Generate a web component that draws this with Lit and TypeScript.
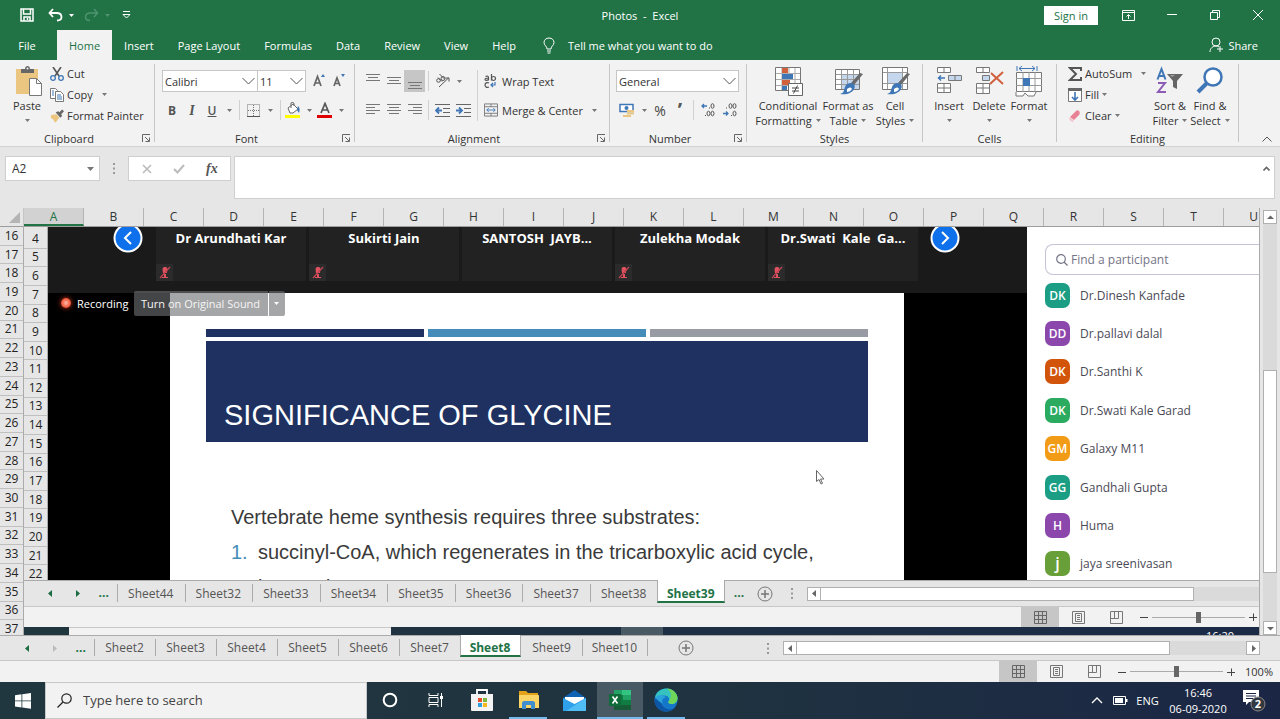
import { LitElement, html, svg, css } from "lit";
import { customElement, state } from "lit/decorators.js";
import { classMap } from "lit/directives/class-map.js";

const range = (from: number, to: number) =>
  Array.from({ length: to - from + 1 }, (_, i) => from + i);

const caret = html`<svg class="caret" width="5" height="3" viewBox="0 0 5 3"><path d="M0 0h5L2.500 3z" fill="#777" /></svg>`;
const launcher = html`<svg width="9" height="9" viewBox="0 0 9 9" fill="none" stroke="#666"><path d="M.5 8V.5H8M3 3l4 4M7.500 3.500v4h-4" /></svg>`;
const chevron = html`<svg class="chev" width="13" height="8" viewBox="0 0 13 8" fill="none" stroke="#555"><path d="M.5 1l6 6 6-6" /></svg>`;

const lines = (rows: [number, number][], y: number) => html`
  <svg width="14" height="16" viewBox="0 0 14 16" stroke="#777">
    ${rows.map(([a, b], i) => svg`<path d="M${a} ${y + i * 3 + 0.5}H${b}" />`)}
  </svg>`;

const brush = svg`
  <path d="M31 8l-9 11-3-2 9-10z" fill="#6a6a6a" />
  <path d="M19 17c3 0 5 3 3 6-2 4-7 6-14 5 4-1 4-4 5-7 1-3 3-4 6-4z" fill="#3f76b5" />
  <path d="M15 23c2-2 4-2 5 0-1 2-3 3-5 3z" fill="#fff" />`;

const icons = {
  save: html`<svg width="14" height="14" viewBox="0 0 14 14" fill="none" stroke="#fff" stroke-width="1.500"><path d="M1 1h12v12H1zM3.500 1v5h7V1M4 13V9h6v4M7.500 10v2" /></svg>`,
  undo: html`<svg width="15" height="14" viewBox="0 0 15 14" fill="none" stroke="#fff" stroke-width="1.800"><path d="M5 1L1.500 5 5 9M2 5h6.500c3 0 5 1.500 5 4s-2 3.500-4.500 3.500" /></svg>`,
  redo: html`<svg width="15" height="14" viewBox="0 0 15 14" fill="none" stroke="#4f9470" stroke-width="1.500"><path d="M10 1l3.500 4L10 9M13 5H6.500c-3 0-5 1.500-5 4s2 3.500 4.500 3.500" /></svg>`,
  customize: html`<svg width="9" height="8" viewBox="0 0 9 8" fill="none" stroke="#fff"><path d="M1 .5h7M1 3.500L4.500 7 8 3.500z" /></svg>`,
  display: html`<svg width="13" height="11" viewBox="0 0 13 11" fill="none" stroke="#fff"><path d="M.5.5h12v10H.5zM.5 2.500h12M6.500 9V5M4.500 6.500l2-2 2 2" /></svg>`,
  min: html`<svg width="10" height="10" viewBox="0 0 10 10" stroke="#fff"><path d="M0 4.500h10" /></svg>`,
  restore: html`<svg width="10" height="10" viewBox="0 0 10 10" fill="none" stroke="#fff"><path d="M.5 2.500h7v7h-7zM2.500 2.500v-2h7v7h-2" /></svg>`,
  close: html`<svg width="10" height="10" viewBox="0 0 10 10" stroke="#fff"><path d="M0 0l10 10M10 0L0 10" /></svg>`,
  bulb: html`<svg width="12" height="17" viewBox="0 0 12 17" fill="none" stroke="#fff"><path d="M4 12c0-3-3-3.500-3-6.500C1 3 3 1 6 1s5 2 5 4.500C11 8.500 8 9 8 12zM4 14h4M4.500 16h3" /></svg>`,
  share: html`<svg width="15" height="16" viewBox="0 0 15 16" fill="none" stroke="#fff"><circle cx="7" cy="5" r="4" /><path d="M1 15c0-4 3-6 6-6 1.500 0 2.500.5 3 1M11 9v6M8 12h6" /></svg>`,
  paste: html`<svg width="32" height="32" viewBox="0 0 32 32"><path d="M5 3h22v25H5z" fill="#ebc680" /><path d="M10 7V3h4c0-4 5-4 5 0h4v4z" fill="#666" /><circle cx="16.500" cy="2.500" r="1" fill="#f2f2f2" /><path d="M18.500 12.500h7l5 5v12h-12z" fill="#fff" stroke="#777" /><path d="M25.500 12.500v5h5" fill="none" stroke="#777" /></svg>`,
  cut: html`<svg width="14" height="14" viewBox="0 0 14 14" fill="none"><path d="M3 0l6 9M11 0L5 9" stroke="#555" stroke-width="1.600" /><circle cx="3" cy="11" r="2.300" stroke="#3f76b5" stroke-width="1.300" /><circle cx="11" cy="11" r="2.300" stroke="#3f76b5" stroke-width="1.300" /></svg>`,
  copy: html`<svg width="14" height="14" viewBox="0 0 14 14" fill="#fff" stroke="#777"><path d="M.5.5h5l2 2v8h-7z" /><path d="M5.500 3.500h5l3 3v7h-8z" /><path d="M2 3h2M2 5h2M2 7h2M7 7h4M7 9h5M7 11h5" stroke="#3f76b5" /></svg>`,
  painter: html`<svg width="14" height="14" viewBox="0 0 15 14"><path d="M1 6l6-1 3 4-4 5c-2-1-2-2-2-3-1 0-2-1-3-2z" fill="#ebc680" /><path d="M6 3l3-1 1 1 3-3 2 2-3 3 1 2-2 2z" fill="#666" /></svg>`,
  grow: html`<svg width="13" height="16" viewBox="0 0 13 16" fill="none" stroke="#666" stroke-width="1.700"><path d="M1 13L4.500 3.500 8 13M2.500 10h4" /><path d="M8 4l2-3 2 3z" fill="#3f76b5" stroke="none" /></svg>`,
  shrink: html`<svg width="13" height="16" viewBox="0 0 13 16" fill="none" stroke="#666" stroke-width="1.700"><path d="M1 13l3-8 3 8M2 10.500h4" /><path d="M8 1h4l-2 3z" fill="#3f76b5" stroke="none" /></svg>`,
  border: html`<svg width="13" height="13" viewBox="0 0 13 13" fill="none" stroke="#777"><path d="M.5.5h12v12H.5zM6.500 1v11M1 6.500h11" stroke-dasharray="1 1" /><path d="M0 12.500h13" stroke="#555" /></svg>`,
  fillColor: html`<svg width="16" height="16" viewBox="0 0 16 16"><path d="M3 6l5-4 5 5-5 4-3 0z" fill="#fff" stroke="#666" /><path d="M6 6V1c1-1 3-1 3 1v2" fill="none" stroke="#666" /><path d="M13 4c2 2 2 4 1 7l-2-3z" fill="#3f76b5" /><path d="M0 13h15v3H0z" fill="#ff0" /></svg>`,
  fontColor: html`<svg width="16" height="16" viewBox="0 0 16 16"><path d="M4 11L8 1.500 12 11M5.500 8h5" fill="none" stroke="#555" stroke-width="1.700" /><path d="M0 13h15v3H0z" fill="#e00000" /></svg>`,
  orient: html`<svg width="15" height="14" viewBox="0 0 15 14" fill="none" stroke="#555"><circle cx="3.500" cy="6.500" r="1.800" /><path d="M3 3.500l4 4" /><circle cx="8" cy="4.500" r="2" /><path d="M4.500 0l5 5M4 13L13.500 4M10.500 4h3.500v3.500" /></svg>`,
  outdent: html`<svg width="15" height="13" viewBox="0 0 15 13" fill="none" stroke="#666"><path d="M0 .5h15M8 4.500h7M8 8.500h7M0 12.500h15" /><path d="M7 6.500H1M4 3.500l-3 3 3 3" stroke="#3f76b5" stroke-width="1.800" /></svg>`,
  indent: html`<svg width="15" height="13" viewBox="0 0 15 13" fill="none" stroke="#666"><path d="M0 .5h15M8 4.500h7M8 8.500h7M0 12.500h15" /><path d="M0 6.500h6M3 3.500l3 3-3 3" stroke="#3f76b5" stroke-width="1.800" /></svg>`,
  wrap: html`<svg width="14" height="14" viewBox="0 0 14 14" fill="none" stroke="#555" stroke-width="1.200"><path d="M1.500 2.500c2-1 3 0 3 1v3M4.500 4c-3 0-3.500.5-3.500 1.500s2 1.500 3.500 0M7.500 0v6.500" /><circle cx="9.500" cy="4.500" r="2" /><path d="M5 9c-2-1-4 0-4 2s2 3 4 2" /><path d="M11 8v3H7M9 9l-2 2 2 2" stroke="#3f76b5" /></svg>`,
  merge: html`<svg width="14" height="14" viewBox="0 0 15 14" fill="none" stroke="#777"><path d="M.5.5h14v13H.5zM.5 3.500h14M.5 10.500h14M7.500.5v3M7.500 10.500v3" /><path d="M3 7h9M5 5L3 7l2 2M10 5l2 2-2 2" stroke="#3f76b5" /></svg>`,
  money: html`<svg width="16" height="15" viewBox="0 0 16 15"><path d="M1 1.500h13v7H1z" fill="#fff" stroke="#3f76b5" stroke-width="1.500" /><circle cx="7.500" cy="5" r="2" fill="#3f76b5" /><path d="M8 7h7v2H8zM8 9.500h7v2H8zM4 12h8v2H4z" fill="#ebc680" /></svg>`,
  incDec: html`<svg width="14" height="14" viewBox="0 0 14 14" fill="none" stroke="#555"><ellipse cx="11.500" cy="3" rx="1.500" ry="2.300" /><ellipse cx="7.500" cy="10.500" rx="1.500" ry="2.300" /><ellipse cx="11.500" cy="10.500" rx="1.500" ry="2.300" /><path d="M8 5h1M4 12.500h1" /><path d="M6 3H1M3 1L1 3l2 2" stroke="#3f76b5" stroke-width="1.300" /></svg>`,
  decDec: html`<svg width="14" height="14" viewBox="0 0 14 14" fill="none" stroke="#555"><ellipse cx="7.500" cy="3" rx="1.500" ry="2.300" /><ellipse cx="11.500" cy="3" rx="1.500" ry="2.300" /><ellipse cx="11.500" cy="10.500" rx="1.500" ry="2.300" /><path d="M3 5h1M8 12.500h1" /><path d="M0 10.500h5M3 8.500l2 2-2 2" stroke="#3f76b5" stroke-width="1.300" /></svg>`,
  conditional: html`<svg width="32" height="32" viewBox="0 0 32 32"><path d="M3.500 1.500h25v23h-25z" fill="#fff" stroke="#777" /><path d="M10 2v22M17 2v22M23 2v22M4 7.500h24M4 13.500h24M4 19.500h24" stroke="#aaa" fill="none" /><path d="M10 2h6v5h-6zM10 14h8v5h-8z" fill="#d1603d" /><path d="M10 8h11v5H10zM10 20h5v4h-5z" fill="#3f76b5" /><path d="M16.500 17.500h14v12h-14z" fill="#fff" stroke="#666" /><path d="M20 22h7M20 25h7M25.500 19.500l-4 8" stroke="#444" fill="none" /></svg>`,
  table: html`<svg width="32" height="32" viewBox="0 0 32 32"><path d="M3.500 3.500h24v20h-24z" fill="#fff" stroke="#777" /><path d="M10 9h17v14H10z" fill="#c5d7ec" /><path d="M9.500 4v19M15.500 4v19M21.500 4v19M4 8.500h23M4 13.500h23M4 18.500h23" stroke="#999" fill="none" />${brush}</svg>`,
  cellStyle: html`<svg width="32" height="32" viewBox="0 0 32 32"><path d="M3.500 1.500h25v22h-25z" fill="#fff" stroke="#777" /><path d="M8.500 2v21M23.500 2v21M4 6.500h24M4 17.500h24" stroke="#999" fill="none" /><path d="M9 7h14v10H9z" fill="#c5d7ec" />${brush}</svg>`,
  insert: html`<svg width="32" height="32" viewBox="0 0 32 32" fill="#fff" stroke="#777"><path d="M4.500 1.500h13v5h-13zM11 1.500v5M4.500 17.500h13v9h-13zM11 17.500v9M4.500 22h13" /><path d="M15.500 9.500h13v5h-13zM22 9.500v5" fill="#c5d7ec" /><path d="M12 12H6M8 9.500L5.500 12 8 14.500" fill="none" stroke="#3f76b5" stroke-width="1.500" /></svg>`,
  del: html`<svg width="32" height="32" viewBox="0 0 32 32" fill="#fff" stroke="#777"><path d="M3.500 1.500h13v5h-13zM10 1.500v5M3.500 17.500h13v10h-13zM10 17.500v10M3.500 22h13" /><path d="M9.500 9.500h7v5h-7z" fill="#c5d7ec" /><path d="M18 7l12 11M30 6L17 18" fill="none" stroke="#d1603d" stroke-width="2" /></svg>`,
  format: html`<svg width="32" height="32" viewBox="0 0 32 32" fill="#fff" stroke="#777"><path d="M3.500 6.500h25v19h-25z" /><path d="M10 6v20M16 6v20M22 6v20M3 12.500h26M3 19.500h26" stroke="#999" fill="none" /><path d="M10 12h7v8h-7z" fill="#3f76b5" stroke="none" /><path d="M3 26v4h7l2-3 3 3h6l2-4" /><path d="M4 0v5M24 0v5M6 2.500h16M9 0L6 2.500 9 5M19 0l3 2.500L19 5" fill="none" stroke="#3f76b5" /></svg>`,
  sum: html`<svg width="14" height="14" viewBox="0 0 14 14" fill="none" stroke="#555" stroke-width="2"><path d="M13 4V1H2l6 6-6 6h11v-3" /></svg>`,
  fill: html`<svg width="14" height="14" viewBox="0 0 14 14"><path d="M.5.5h13v13H.5z" fill="#fff" stroke="#777" /><path d="M0 0h14v3H0z" fill="#666" /><path d="M7 4v8M4 9l3 3 3-3" fill="none" stroke="#3f76b5" stroke-width="1.600" /></svg>`,
  clear: html`<svg width="14" height="14" viewBox="0 0 14 14"><path d="M2 8l6-6c1-1 2-1 3 0s1 3 0 4l-5 5z" fill="#e88194" /><path d="M2 8l4 4-1 1c-1 0-3-1-4-3z" fill="#f6c5cc" /></svg>`,
  sort: html`<svg width="32" height="32" viewBox="0 0 32 32" fill="none"><path d="M3.500 13.500L7.500 3l4 10.500M5 10h5" stroke="#3f76b5" stroke-width="2" /><path d="M4 17h7L4 26h8" stroke="#8b5bb5" stroke-width="2" /><path d="M13 8h16l-6 7v8l-4-2v-6z" fill="#666" /><path d="M16 9.500h5l-3 1z" fill="#ddd" /></svg>`,
  find: html`<svg width="32" height="32" viewBox="0 0 32 32"><circle cx="19" cy="11" r="8.500" fill="#fff" stroke="#3f76b5" stroke-width="2.500" /><path d="M13 17L4 26" stroke="#3f76b5" stroke-width="4" /></svg>`,
  mic: html`<svg width="12" height="13" viewBox="0 0 12 13"><path d="M6 1c3 0 2.500 2 2 6H4c-.5-4-1-6 2-6zM5 8h2v3h2v1H3v-1h2z" fill="#e05260" /><path d="M11 1L1 12" stroke="#c04552" stroke-width="1.300" /></svg>`,
  prev: html`<svg width="30" height="30" viewBox="0 0 30 30"><circle cx="15" cy="15" r="13.500" fill="#0e71eb" stroke="#fff" stroke-width="2" /><path d="M18 9l-6 6 6 6" fill="none" stroke="#fff" stroke-width="2" /></svg>`,
  next: html`<svg width="30" height="30" viewBox="0 0 30 30"><circle cx="15" cy="15" r="13.500" fill="#0e71eb" stroke="#fff" stroke-width="2" /><path d="M12 9l6 6-6 6" fill="none" stroke="#fff" stroke-width="2" /></svg>`,
  plus: html`<svg width="16" height="16" viewBox="0 0 16 16" fill="none" stroke="#777"><circle cx="8" cy="8" r="7" /><path d="M8 4v8M4 8h8" stroke-width="1.500" /></svg>`,
  grid: html`<svg width="13" height="13" viewBox="0 0 13 13" fill="none" stroke="#666"><path d="M.5.5h12v12H.5zM4.500.5v12M8.500.5v12M.5 4.500h12M.5 8.500h12" /></svg>`,
  page: html`<svg width="13" height="13" viewBox="0 0 13 13" fill="none" stroke="#777"><path d="M.5.5h12v12H.5zM3.500 2.500h6v8h-6zM5 4.500h3M5 6.500h3M5 8.500h3" /></svg>`,
  breaks: html`<svg width="13" height="13" viewBox="0 0 13 13" fill="none" stroke="#777"><path d="M.5.5h12v12H.5zM.5 7.500h8v-7M4.500.5v7" /></svg>`,
};

const participants = [
  { initials: "DK", name: "Dr.Dinesh Kanfade", tone: "teal" },
  { initials: "DD", name: "Dr.pallavi dalal", tone: "purple" },
  { initials: "DK", name: "Dr.Santhi K", tone: "orange" },
  { initials: "DK", name: "Dr.Swati Kale Garad", tone: "green" },
  { initials: "GM", name: "Galaxy M11", tone: "amber" },
  { initials: "GG", name: "Gandhali Gupta", tone: "teal" },
  { initials: "H", name: "Huma", tone: "purple" },
  { initials: "j", name: "jaya sreenivasan", tone: "olive" },
];

const tiles = [
  { name: "Dr Arundhati Kar", muted: true },
  { name: "Sukirti Jain", muted: true },
  { name: "SANTOSH  JAYB...", muted: false },
  { name: "Zulekha Modak", muted: true },
  { name: "Dr.Swati  Kale  Ga...", muted: true },
];

@customElement("app-root")
export class AppRoot extends LitElement {
  @state() private sheet = "Sheet8";
  @state() private sharedSheet = "Sheet39";

  static styles = css`
    :host {
      display: flex;
      flex-direction: column;
      height: 100vh;
      overflow: hidden;
      background: #e6e6e6;
      color: #333;
      font: 11px/15px "Open Sans", "Noto Sans", sans-serif;
    }
    * { box-sizing: border-box; }
    button, input, select { font: inherit; color: inherit; margin: 0; }
    button { border: 0; padding: 0; background: none; display: flex; align-items: center; justify-content: center; white-space: nowrap; }
    ul, ol, h1, p { margin: 0; padding: 0; list-style: none; }
    svg { display: block; flex: none; }
    .grow { flex: 1; min-width: 0; }

    .title { display: grid; grid-template-columns: 1fr auto 1fr; align-items: center; height: 30px; background: #217346; color: #fff; }
    .title-name { white-space: pre; }
    .quick { display: flex; align-items: center; padding-left: 20px; }
    .quick .save { width: 14px; }
    .quick .undo { width: 20px; margin-left: 11px; }
    .quick .redo { width: 20px; margin-left: 4px; }
    .quick .more { width: 20px; margin-left: 3px; }
    .quick .tiny { width: 12px; height: 20px; }
    .quick .tiny path { fill: #fff; }
    .quick .dim path { fill: #4f9470; }
    .window { display: flex; justify-content: flex-end; align-items: center; padding-right: 1px; }
    .signin { width: 54px; height: 19px; margin-right: 9px; background: #fff; color: #217346; }
    .window .wbtn { width: 43px; height: 30px; }

    .tabs { display: flex; height: 30px; background: #217346; color: #fff; }
    .tabs button { padding: 0 12px; }
    .tabs .file { width: 57px; padding-right: 15px; }
    .tabs .active { background: #f2f2f2; color: #217346; }
    .tabs .tell { gap: 13px; padding: 0 15px; }
    .tabs .share { gap: 4px; padding: 0 22px; }

    .ribbon { display: flex; height: 87px; background: #f2f2f2; border-bottom: 1px solid #d2d2d2; }
    .gsep { width: 1px; margin: 4px 0; background: #c6c6c6; flex: none; }
    .group { display: flex; flex-direction: column; flex: none; }
    .gbody { display: flex; flex: 1; }
    .foot { display: flex; align-items: center; height: 15px; }
    .foot span { flex: 1; text-align: center; }
    .foot button { width: 16px; height: 15px; }
    .clipboard { width: 154px; }
    .font { width: 199px; }
    .alignment { width: 254px; }
    .number { width: 136px; }
    .styles { width: 175px; }
    .cells { width: 133px; }
    .editing { width: 181px; }
    .big { flex-direction: column; justify-content: flex-start; padding-top: 6px; height: 71px; }
    .big .line { display: flex; align-items: center; gap: 4px; height: 15px; }
    .w56 { width: 54px; }
    .w72 { width: 72px; }
    .w48 { width: 48px; }
    .w46 { width: 46px; }
    .w40 { width: 40px; }
    .three { display: flex; flex-direction: column; padding-top: 3px; }
    .three button { height: 21px; justify-content: flex-start; gap: 3px; }
    .clipboard .three { margin-left: -4px; }
    .three .far { margin-left: 6px; }
    .two { display: flex; flex-direction: column; gap: 7px; padding-top: 10px; }
    .bar { display: flex; align-items: center; height: 22px; }
    .bar button { height: 22px; }
    .c { width: 20px; }
    .c18 { width: 18px; }
    .c22 { width: 22px; }
    .k { width: 14px; }
    .k12 { width: 12px; }
    .on { background: #c6c6c6; }
    .vs { width: 1px; height: 20px; margin: 0 3px; background: #d0d0d0; }
    .bold { font-weight: 700; font-size: 12px; color: #555; }
    .italic { font-family: "Liberation Serif", serif; font-style: italic; font-weight: 700; font-size: 14px; color: #555; }
    .under { text-decoration: underline; font-weight: 600; font-size: 12px; color: #555; }
    .sign { font-size: 14px; color: #444; }
    .comma { font-size: 20px; font-weight: 700; line-height: 10px; color: #555; }
    .pick { display: grid; align-items: center; }
    .pick > * { grid-area: 1 / 1; }
    .pick select { appearance: none; width: 100%; height: 22px; padding: 0 2px; border: 1px solid #c6c6c6; border-radius: 0; background: #fff; }
    .pick .chev { justify-self: end; margin-right: 3px; pointer-events: none; }
    .face { width: 96px; }
    .size { width: 49px; margin-left: -1px; margin-right: 3px; }
    .numfmt { width: 123px; }
    .font .two, .alignment .two { padding-left: 7px; }
    .number .two { padding-left: 6px; }
    .alignment .first { width: 122px; }
    .first .c { width: 21px; }
    .alignment .second { padding-left: 6px; border-left: 1px solid #d0d0d0; margin: 10px 0; padding-top: 0; }
    .second button { gap: 4px; justify-content: flex-start; }
    .second .far { margin-left: 5px; }
    .styles .gbody { padding-left: 5px; }
    .cells .gbody { padding-left: 6px; }
    .editing .gbody { padding-left: 11px; }
    .editing .three { width: 82px; }
    .collapse { align-self: flex-end; width: 26px; height: 14px; }

    .formula { display: flex; align-items: flex-start; height: 61px; padding: 9px 5px; }
    .namebox { display: grid; width: 95px; align-items: center; }
    .namebox > * { grid-area: 1 / 1; }
    .namebox input { width: 100%; height: 25px; border: 1px solid #cfcfcf; background: #fff; padding: 0 6px; font-size: 12px; }
    .namebox button { justify-self: end; width: 20px; height: 20px; }
    .grip { width: 28px; height: 25px; display: flex; align-items: center; justify-content: center; }
    .fx { display: flex; width: 103px; height: 25px; background: #fff; border: 1px solid #cfcfcf; justify-content: space-around; padding: 0 2px; }
    .fx button { width: 33px; }
    .fx .fn { font: italic 700 14px "Liberation Serif", serif; color: #555; }
    .entry { display: flex; flex: 1; align-self: stretch; margin-left: 3px; border: 1px solid #cfcfcf; background: #fff; }
    .entry input { flex: 1; border: 0; background: none; }
    .entry button { width: 16px; height: 22px; }

    .book { display: flex; flex: 1; min-height: 0; }
    .sheet { flex: 1; min-width: 0; display: grid; grid-template: 19px 1fr / 24px 1fr; border-right: 1px solid #ababab; }
    .corner { display: flex; align-items: flex-end; justify-content: flex-end; padding: 3px; border-right: 1px solid #c6c6c6; border-bottom: 1px solid #9d9d9d; }
    .cols { display: flex; overflow: hidden; border-bottom: 1px solid #9d9d9d; }
    .cols span { flex: 0 0 60px; text-align: center; font-size: 12px; line-height: 18px; border-right: 1px solid #b5b5b5; }
    .cols .sel { background: #d2d2d2; color: #217346; border-bottom: 2px solid #217346; }
    .rows { overflow: hidden; min-height: 0; border-right: 1px solid #ababab; }
    .nums { display: grid; grid-auto-rows: 1fr; height: calc(100% + 4px); }
    .nums span { display: flex; align-items: center; justify-content: center; min-height: 0; font-size: 12px; line-height: 14px; color: #222; border-bottom: 1px solid #c0c0c0; }
    .inset { padding-top: 3px; }
    .vscroll { width: 20px; display: flex; flex-direction: column; align-items: center; padding-top: 2px; }
    .arrow { width: 14px; height: 14px; flex: none; background: #fff; border: 1px solid #b0b0b0; }
    .vtrack { flex: 1; width: 14px; display: flex; flex-direction: column; background: #dadada; }
    .vtrack i { flex: 147; }
    .vtrack b { flex: 203; background: #fff; border: 1px solid #b0b0b0; }
    .vtrack u { flex: 48; }

    .pic { min-width: 0; min-height: 0; display: flex; flex-direction: column; overflow: hidden; }
    .shared { flex: 1; min-height: 0; display: grid; grid-template-columns: 24px 1fr 232px; }
    .shared > * { min-width: 0; min-height: 0; overflow: hidden; }
    .meeting { display: flex; flex-direction: column; background: #000; position: relative; }
    .strip { display: flex; flex: none; padding-left: 65px; height: 66px; background: #1a1a1a; color: #fff; }
    .strip .nav { width: 30px; height: 30px; margin-top: -4px; }
    .tiles { display: flex; gap: 3px; padding: 0 12px 0 13px; flex: none; }
    .tile { display: flex; flex-direction: column; justify-content: space-between; width: 150px; height: 54px; background: #222; font-size: 13px; font-weight: 700; white-space: pre; text-align: center; line-height: 22px; }
    .mute { display: flex; align-items: center; justify-content: center; width: 17px; height: 17px; background: #2b2b2b; }
    .recording { position: absolute; top: 63px; left: 9px; display: flex; align-items: center; color: #fff; height: 26px; }
    .dot { width: 10px; height: 10px; margin: 0 6px 0 4px; border-radius: 5px; background: radial-gradient(#ffb9a8, #f25a3c 60%, #d8371c); box-shadow: 0 0 5px #d8371c; }
    .sound { width: 134px; height: 25px; margin-left: 5px; background: rgba(110, 112, 114, 0.62); color: #f5f5f5; border-radius: 2px 0 0 2px; }
    .sound-more { width: 16px; height: 25px; margin-left: 1px; background: rgba(110, 112, 114, 0.62); border-radius: 0 2px 2px 0; }
    .sound-more path { fill: #fff; }
    .slide { flex: 1; min-height: 0; margin: 0 123px 0 122px; padding: 36px 36px 0; background: #fff; overflow: hidden; font-family: "Liberation Sans", Arial, sans-serif; color: #3a3a3a; }
    .bands { display: grid; grid-template-columns: repeat(3, 1fr); gap: 4px; height: 8px; }
    .navy { background: #1e3160; }
    .blue { background: #468cb8; }
    .gray { background: #999ba4; }
    .slide h1 { margin-top: 4px; height: 101px; padding: 57px 18px 0; background: #1e3160; color: #fff; font-size: 29px; font-weight: 400; line-height: 34px; white-space: nowrap; }
    .slide-text { padding: 61px 0 0 25px; font-size: 20px; line-height: 28px; white-space: nowrap; }
    .slide-text li { display: flex; margin-top: 7px; }
    .slide-text .n { width: 27px; color: #468cb8; flex: none; }
    .cursor { position: absolute; left: 768px; top: 243px; }

    .people { background: #fff; display: flex; flex-direction: column; padding: 17px 0 0 18px; }
    .search { display: flex; align-items: center; gap: 3px; height: 31px; flex: none; padding-left: 10px; border: 1px solid #c4c4d4; border-right: 0; border-radius: 8px 0 0 8px; color: #747487; font-size: 12px; }
    .search input { flex: 1; min-width: 0; border: 0; padding: 0; background: none; outline: 0; }
    input::placeholder { color: inherit; opacity: 1; }
    .people ul { display: grid; grid-auto-rows: 1fr; flex: 1; margin: 1px 0 -3px; }
    .people li { display: flex; align-items: center; gap: 10px; font-size: 12px; color: #4a4a56; min-height: 0; }
    .avatar { width: 25px; height: 25px; border-radius: 7px; color: #fff; display: flex; align-items: center; justify-content: center; font-weight: 600; }
    .teal { background: #1b9e84; }
    .purple { background: #8c47ad; }
    .orange { background: #d2540a; }
    .green { background: #2bab60; }
    .amber { background: #f29b16; }
    .olive { background: #689f38; font-size: 16px; }

    .sheetbar { display: flex; align-items: center; height: 27px; flex: none; background: #e6e6e6; border-top: 1px solid #ababab; border-bottom: 1px solid #c8c8c8; font-size: 12px; color: #555; }
    .outer-bar { height: 26px; }
    .steps { display: flex; flex: none; height: 100%; align-items: center; color: #217346; font-weight: 700; }
    .steps button { width: 27px; height: 20px; }
    .steps .dots { padding-bottom: 2px; }
    .outer-steps { width: 94px; padding-left: 14px; }
    .inner-steps { width: 93px; padding-left: 13px; }
    .list { display: grid; flex: none; align-self: stretch; }
    .outer-list { grid-template-columns: repeat(8, 61px) 66px; }
    .inner-list { grid-template-columns: repeat(9, 1fr); width: 608px; }
    .list button { border-left: 1px solid #ababab; margin: 3px 0 4px; padding-right: 1px; }
    .list button:last-child { border-right: 1px solid #ababab; }
    .list .current { margin: -1px 0 3px; padding-top: 5px; background: #fff; color: #217346; font-weight: 700; border-bottom: 2px solid #217346; border-right: 1px solid #ababab; }
    .list .current + button { border-left-color: transparent; }
    .after { width: 28px; color: #217346; font-weight: 700; padding-bottom: 2px; }
    .add { width: 24px; height: 22px; }
    .outer-add { margin-left: 26px; }
    .bar-grip { display: flex; justify-content: center; width: 30px; }
    .hscroll { display: flex; height: 14px; background: #dadada; flex: none; }
    .hscroll b { background: #fff; border: 1px solid #b0b0b0; border-left: 0; width: 373px; }
    .outer-scroll { width: 477px; }
    .inner-scroll { width: 452px; }
    .end { width: 20px; flex: none; }

    .status { display: flex; align-items: center; justify-content: flex-end; height: 20px; flex: none; background: #f2f2f2; }
    .outer-status { height: 21px; padding-right: 7px; }
    .status .view { width: 38px; align-self: stretch; }
    .status .zoom { width: 12px; height: 18px; }
    .status .lead { margin-left: 3px; }
    .status input { width: 93px; margin: 0 2px; height: 14px; appearance: none; background: linear-gradient(#aaa, #aaa) center / 100% 1px no-repeat; }
    .status input::-webkit-slider-thumb { appearance: none; width: 5px; height: 11px; background: #666; }
    .pct { margin-left: 8px; }
    .under-strip { display: flex; height: 8px; flex: none; background: linear-gradient(90deg, #21373f, #1b2a47); overflow: hidden; color: #fff; }
    .under-search { width: 322px; margin-left: 45px; background: #f2f2f2; border-top: 1px solid #c8c8c8; }
    .under-app { width: 42px; margin-left: 230px; background: #4a5a64; }
    .under-clock { margin-left: auto; margin-right: 25px; padding-top: 1px; }

    .taskbar { display: flex; height: 37px; flex: none; background: linear-gradient(90deg, #21373f, #1f3340 55%, #1b2645); color: #fff; }
    .start { width: 45px; }
    .find { display: flex; align-items: center; gap: 11px; width: 322px; padding-left: 11px; background: #f2f2f2; border: 1px solid #c8c8c8; color: #444; font-size: 13px; }
    .find input { flex: 1; min-width: 0; border: 0; padding: 0; background: none; outline: 0; }
    .app { width: 46px; border-bottom: 2px solid transparent; padding-top: 1px; }
    .run { background: linear-gradient(#76b9ed, #76b9ed) bottom / 38px 2px no-repeat border-box; }
    .front { background: #4a5a64; border-bottom-color: #76b9ed; }
    .apps { display: flex; flex: 1; }
    .tray { display: flex; align-items: center; }
    .tray button { height: 37px; }
    .up { width: 24px; }
    .battery { width: 22px; }
    .lang { width: 33px; }
    .clock { width: 68px; flex-direction: column; }
    .clock span { line-height: 16px; }
    .notes { width: 45px; margin-right: 3px; }
  `;

  private small(icon: unknown, label: string, cls = "c") {
    return html`<button class=${cls} aria-label=${label}>${icon}</button>`;
  }

  private drop(label: string, cls = "k") {
    return html`<button class=${cls} aria-label=${label}>${caret}</button>`;
  }

  private big(icon: unknown, first: string, second: string, cls: string) {
    return html`<button class="big ${cls}">${icon}<span class="line">${first}</span><span class="line">${second}${caret}</span></button>`;
  }

  private foot(label: string, launch = true) {
    return html`<div class="foot"><span>${label}</span>${launch ? html`<button aria-label="${label} settings">${launcher}</button>` : ""}</div>`;
  }

  private grip() {
    return html`<svg width="2" height="11" viewBox="0 0 2 11" fill="#999"><path d="M0 0h2v2H0zM0 4.500h2v2H0zM0 9h2v2H0z" /></svg>`;
  }

  private tri(dir: "l" | "r" | "u" | "d", color = "#666") {
    const d = { l: "M6 1v7L2 4.500z", r: "M3 1v7l4-3.500z", u: "M1 6h7L4.500 2.500z", d: "M1 3h7L4.500 6.500z" }[dir];
    return html`<svg width="9" height="9" viewBox="0 0 9 9"><path d=${d} fill=${color} /></svg>`;
  }

  private tabs(names: string[], current: string, pick: (n: string) => void, cls: string) {
    return html`<div class="list ${cls}">${names.map(
      (n) => html`<button class=${classMap({ current: n === current })} @click=${() => pick(n)}>${n}</button>`
    )}</div>`;
  }

  private status(cls: string, end: unknown) {
    return html`<div class="status ${cls}">
      <button class="view on" aria-label="Normal">${icons.grid}</button>
      <button class="view" aria-label="Page Layout">${icons.page}</button>
      <button class="view" aria-label="Page Break Preview">${icons.breaks}</button>
      <button class="zoom lead" aria-label="Zoom out"><svg width="8" height="8" stroke="#444"><path d="M0 4.500h8" /></svg></button>
      <input type="range" min="0" max="100" value="50" aria-label="Zoom" />
      <button class="zoom" aria-label="Zoom in"><svg width="8" height="8" stroke="#444"><path d="M0 4.500h8M4.500 .5v8" /></svg></button>
      ${end}
    </div>`;
  }

  private renderTop() {
    return html`
      <header class="title">
        <div class="quick">
          ${this.small(icons.save, "Save", "save")}
          ${this.small(icons.undo, "Undo", "undo")}${this.drop("Undo list", "tiny")}
          ${this.small(icons.redo, "Redo", "redo")}${this.drop("Redo list", "tiny dim")}
          ${this.small(icons.customize, "Customize", "more")}
        </div>
        <span class="title-name">Photos  -  Excel</span>
        <div class="window">
          <button class="signin">Sign in</button>
          ${this.small(icons.display, "Ribbon display", "wbtn")}
          ${this.small(icons.min, "Minimize", "wbtn")}
          ${this.small(icons.restore, "Restore", "wbtn")}
          ${this.small(icons.close, "Close", "wbtn")}
        </div>
      </header>
      <nav class="tabs">
        <button class="file">File</button>
        <button class="active">Home</button>
        ${["Insert", "Page Layout", "Formulas", "Data", "Review", "View", "Help"].map((t) => html`<button>${t}</button>`)}
        <button class="tell">${icons.bulb}Tell me what you want to do</button>
        <span class="grow"></span>
        <button class="share">${icons.share}Share</button>
      </nav>`;
  }

  private renderRibbon() {
    const sep = html`<i class="gsep"></i>`;
    const vs = html`<i class="vs"></i>`;
    return html`<section class="ribbon">
      <div class="group clipboard">
        <div class="gbody">
          <button class="big w56">${icons.paste}<span class="line">Paste</span><span class="line">${caret}</span></button>
          <div class="three">
            <button>${icons.cut}Cut</button>
            <button>${icons.copy}Copy<span class="far">${caret}</span></button>
            <button>${icons.painter}Format Painter</button>
          </div>
        </div>
        ${this.foot("Clipboard")}
      </div>
      ${sep}
      <div class="group font">
        <div class="gbody"><div class="two">
          <div class="bar">
            <label class="pick face"><select aria-label="Font"><option>Calibri</option></select>${chevron}</label>
            <label class="pick size"><select aria-label="Font size"><option>11</option></select>${chevron}</label>
            ${this.small(icons.grow, "Increase font size")}
            ${this.small(icons.shrink, "Decrease font size")}
          </div>
          <div class="bar">
            <button class="c bold">B</button><button class="c italic">I</button><button class="c under">U</button>${this.drop("Underline style")}
            ${vs}${this.small(icons.border, "Borders")}${this.drop("Border list")}
            ${vs}${this.small(icons.fillColor, "Fill color", "c18")}${this.drop("Fill colors")}${this.small(icons.fontColor, "Font color", "c18")}${this.drop("Font colors")}
          </div>
        </div></div>
        ${this.foot("Font")}
      </div>
      ${sep}
      <div class="group alignment">
        <div class="gbody">
          <div class="two first">
            <div class="bar">
              ${this.small(lines([[0, 14], [2, 12], [0, 14]], 1), "Top align")}
              ${this.small(lines([[0, 14], [2, 12], [0, 14]], 4), "Middle align")}
              ${this.small(lines([[0, 14], [2, 12], [0, 14]], 9), "Bottom align", "c on")}
              ${vs}${this.small(icons.orient, "Orientation")}${this.drop("Orientation list", "k12")}
            </div>
            <div class="bar">
              ${this.small(lines([[0, 14], [0, 9], [0, 14], [0, 9]], 2), "Align left")}
              ${this.small(lines([[0, 14], [2, 12], [0, 14], [2, 12]], 2), "Center")}
              ${this.small(lines([[0, 14], [5, 14], [0, 14], [5, 14]], 2), "Align right")}
              ${vs}${this.small(icons.outdent, "Decrease indent")}${this.small(icons.indent, "Increase indent")}
            </div>
          </div>
          <div class="two second">
            <div class="bar"><button>${icons.wrap}Wrap Text</button></div>
            <div class="bar"><button>${icons.merge}Merge &amp; Center<span class="far">${caret}</span></button></div>
          </div>
        </div>
        ${this.foot("Alignment")}
      </div>
      ${sep}
      <div class="group number">
        <div class="gbody"><div class="two">
          <div class="bar"><label class="pick numfmt"><select aria-label="Number format"><option>General</option></select>${chevron}</label></div>
          <div class="bar">
            ${this.small(icons.money, "Accounting format", "c22")}${this.drop("Accounting list", "k12")}
            <button class="c sign">%</button><button class="c comma">’</button>${vs}
            ${this.small(icons.incDec, "Increase decimal", "c22")}${this.small(icons.decDec, "Decrease decimal", "c22")}
          </div>
        </div></div>
        ${this.foot("Number")}
      </div>
      ${sep}
      <div class="group styles">
        <div class="gbody">
          ${this.big(icons.conditional, "Conditional", "Formatting", "w72")}
          ${this.big(icons.table, "Format as", "Table", "w48")}
          ${this.big(icons.cellStyle, "Cell", "Styles", "w46")}
        </div>
        ${this.foot("Styles", false)}
      </div>
      ${sep}
      <div class="group cells">
        <div class="gbody">
          ${this.big(icons.insert, "Insert", "", "w40")}
          ${this.big(icons.del, "Delete", "", "w40")}
          ${this.big(icons.format, "Format", "", "w40")}
        </div>
        ${this.foot("Cells", false)}
      </div>
      ${sep}
      <div class="group editing">
        <div class="gbody">
          <div class="three">
            <button>${icons.sum}AutoSum<span class="far">${caret}</span></button>
            <button>${icons.fill}Fill ${caret}</button>
            <button>${icons.clear}Clear${caret}</button>
          </div>
          ${this.big(icons.sort, "Sort &", "Filter", "w40")}
          ${this.big(icons.find, "Find &", "Select", "w40")}
        </div>
        ${this.foot("Editing", false)}
      </div>
      ${sep}
      <span class="grow"></span>
      <button class="collapse" aria-label="Collapse ribbon"><svg width="10" height="6" fill="none" stroke="#555"><path d="M.5 5.500l4.500-4.500 4.500 4.500" /></svg></button>
    </section>`;
  }

  private renderPicture() {
    return html`<div class="pic">
      <div class="shared">
        <div class="rows"><div class="nums inset">${range(4, 22).map((n) => html`<span>${n}</span>`)}</div></div>
        <div class="meeting">
          <div class="strip">
            <button class="nav" aria-label="Previous">${icons.prev}</button>
            <div class="tiles">${tiles.map(
              (t) => html`<div class="tile">${t.name}${t.muted ? html`<span class="mute">${icons.mic}</span>` : ""}</div>`
            )}</div>
            <button class="nav" aria-label="Next">${icons.next}</button>
          </div>
          <article class="slide">
            <div class="bands"><i class="navy"></i><i class="blue"></i><i class="gray"></i></div>
            <h1>SIGNIFICANCE OF GLYCINE</h1>
            <div class="slide-text">
              <p>Vertebrate heme synthesis requires three substrates:</p>
              <ol>
                <li><span class="n">1.</span>succinyl-CoA, which regenerates in the tricarboxylic acid cycle,</li>
                <li><span class="n"></span>iron and</li>
              </ol>
            </div>
          </article>
          <div class="recording">
            <i class="dot"></i><span>Recording</span>
            <button class="sound">Turn on Original Sound</button>
            <button class="sound-more" aria-label="Sound options">${caret}</button>
          </div>
          <svg class="cursor" width="10" height="15" viewBox="0 0 10 15"><path d="M.5.5v11l2.500-2 2 4.500 1.500-.7-2-4.300H8z" fill="#fff" stroke="#666" /></svg>
        </div>
        <aside class="people">
          <label class="search">
            <svg width="12" height="12" viewBox="0 0 12 12" fill="none" stroke="#747487" stroke-width="1.200"><circle cx="5" cy="5" r="4.300" /><path d="M8 8l3.500 3.500" /></svg>
            <input type="text" placeholder="Find a participant" aria-label="Find a participant" />
          </label>
          <ul>${participants.map((p) => html`<li><span class="avatar ${p.tone}">${p.initials}</span>${p.name}</li>`)}</ul>
        </aside>
      </div>
      <div class="sheetbar">
        <div class="steps inner-steps">
          <button aria-label="Previous sheet">${this.tri("l", "#1d6b40")}</button>
          <button aria-label="Next sheet">${this.tri("r", "#1d6b40")}</button>
          <button class="dots">...</button>
        </div>
        ${this.tabs([44, 32, 33, 34, 35, 36, 37, 38, 39].map((n) => `Sheet${n}`), this.sharedSheet, (n) => (this.sharedSheet = n), "inner-list")}
        <button class="after">...</button>
        <button class="add" aria-label="New sheet">${icons.plus}</button>
        <span class="grow"></span>
        <span class="bar-grip">${this.grip()}</span>
        <div class="hscroll inner-scroll"><button class="arrow" aria-label="Scroll left">${this.tri("l")}</button><b></b></div>
      </div>
      ${this.status("", "")}
      <div class="under-strip"><i class="under-search"></i><i class="under-app"></i><span class="under-clock">16:20</span></div>
    </div>`;
  }

  private renderBook() {
    return html`
      <section class="formula">
        <div class="namebox">
          <input type="text" value="A2" aria-label="Name box" />
          <button aria-label="Names"><svg width="7" height="4"><path d="M0 0h7L3.500 4z" fill="#777" /></svg></button>
        </div>
        <span class="grip">${this.grip()}</span>
        <div class="fx">
          <button aria-label="Cancel"><svg width="10" height="10" stroke="#bbb" stroke-width="1.600"><path d="M1 1l8 8M9 1L1 9" /></svg></button>
          <button aria-label="Enter"><svg width="12" height="10" fill="none" stroke="#bbb" stroke-width="2"><path d="M1 5l3.500 3.500L11 1" /></svg></button>
          <button class="fn">fx</button>
        </div>
        <div class="entry">
          <input type="text" aria-label="Formula" />
          <button aria-label="Collapse formula bar"><svg width="7" height="5" fill="none" stroke="#666" stroke-width="1.600"><path d="M.5 4.500l3-3 3 3" /></svg></button>
        </div>
      </section>
      <main class="book">
        <div class="sheet">
          <div class="corner"><svg width="11" height="11"><path d="M11 0v11H0z" fill="#b4b4b4" /></svg></div>
          <div class="cols">${[..."ABCDEFGHIJKLMNOPQRSTU"].map((c, i) => html`<span class=${classMap({ sel: i === 0 })}>${c}</span>`)}</div>
          <div class="rows"><div class="nums">${range(16, 37).map((n) => html`<span>${n}</span>`)}</div></div>
          ${this.renderPicture()}
        </div>
        <div class="vscroll">
          <button class="arrow" aria-label="Scroll up">${this.tri("u")}</button>
          <div class="vtrack"><i></i><b></b><u></u></div>
          <button class="arrow" aria-label="Scroll down">${this.tri("d")}</button>
        </div>
      </main>
      <div class="sheetbar outer-bar">
        <div class="steps outer-steps">
          <button aria-label="Previous sheet">${this.tri("l", "#1d6b40")}</button>
          <button aria-label="Next sheet">${this.tri("r", "#bbb")}</button>
          <button class="dots">...</button>
        </div>
        ${this.tabs(range(2, 10).map((n) => `Sheet${n}`), this.sheet, (n) => (this.sheet = n), "outer-list")}
        <button class="add outer-add" aria-label="New sheet">${icons.plus}</button>
        <span class="grow"></span>
        <span class="bar-grip">${this.grip()}</span>
        <div class="hscroll outer-scroll">
          <button class="arrow" aria-label="Scroll left">${this.tri("l")}</button><b></b><span class="grow"></span>
          <button class="arrow" aria-label="Scroll right">${this.tri("r")}</button>
        </div>
        <span class="end"></span>
      </div>
      ${this.status("outer-status", html`<span class="pct">100%</span>`)}`;
  }

  private renderTaskbar() {
    return html`<footer class="taskbar">
      <button class="start" aria-label="Start"><svg width="16" height="16" viewBox="0 0 16 16" fill="#fff"><path d="M0 2.300L6.500 1.300v6.200H0zM7.300 1.200L16 0v7.500H7.300zM0 8.300h6.500v6.200L0 13.600zM7.300 8.300H16v7.500l-8.700-1.200z" /></svg></button>
      <label class="find">
        <svg width="15" height="15" viewBox="0 0 15 15" fill="none" stroke="#222" stroke-width="1.200"><circle cx="9.500" cy="5.500" r="4.700" /><path d="M6 9l-5.500 5.500" /></svg>
        <input type="text" placeholder="Type here to search" aria-label="Type here to search" />
      </label>
      <div class="apps">
        <button class="app" aria-label="Cortana"><svg width="16" height="16"><circle cx="8" cy="8" r="6.300" fill="none" stroke="#fff" stroke-width="2" /></svg></button>
        <button class="app" aria-label="Task view"><svg width="16" height="16" viewBox="0 0 16 16" fill="none" stroke="#fff"><path d="M1 1v2.500h9V1M1 5.500h9v5H1zM1 15v-2.500h9V15M13.500 1v14" /><path d="M12 4h3v3h-3z" fill="#fff" stroke="none" /></svg></button>
        <button class="app" aria-label="Store"><svg width="22" height="24" viewBox="0 0 22 24"><path d="M6 7V2h10v5" fill="none" stroke="#fff" stroke-width="1.800" /><path d="M0 6h22v16c0 1-1 1-1 1H1c-1 0-1-1-1-1z" fill="#f3f3f3" /><path d="M7 10h4v4H7z" fill="#e8502a" /><path d="M12 10h4v4h-4z" fill="#7eb93f" /><path d="M7 15h4v4H7z" fill="#2f9fe0" /><path d="M12 15h4v4h-4z" fill="#f4b81c" /></svg></button>
        <button class="app run" aria-label="File Explorer"><svg width="21" height="18" viewBox="0 0 21 18"><path d="M1 0h7l2 2h10v5H1z" fill="#e3a21a" /><path d="M1 4h19c1 0 1 0 1 1v12H1z" fill="#fbd667" /><path d="M4 18v-6c0-1 1-2 2-2h9c1 0 2 1 2 2v6h-4v-4H8v4z" fill="#3f8fce" /></svg></button>
        <button class="app" aria-label="Mail"><svg width="23" height="21" viewBox="0 0 23 21"><path d="M0 8l11.500-8L23 8v13H0z" fill="#0f62b4" /><path d="M2 7h19v8H2z" fill="#fff" /><path d="M0 8l11.500 6L23 8v13H0z" fill="#2fa0ea" /><path d="M23 8v13H3z" fill="#50bdf5" /></svg></button>
        <button class="app front" aria-label="Excel"><svg width="22" height="20" viewBox="0 0 22 20"><path d="M5 0h17v20H5z" fill="#21a366" /><path d="M13 0h9v5h-9z" fill="#33c481" /><path d="M5 5h9v10H5z" fill="#107c41" /><path d="M5 15h17v5H5z" fill="#185c37" /><path d="M14 10h8v5h-8z" fill="#107c41" /><path d="M0 4h12v12H0z" fill="#0f6b39" /><path d="M3.500 6.500l5 7M8.500 6.500l-5 7" stroke="#fff" stroke-width="1.600" /></svg></button>
        <button class="app run" aria-label="Edge"><svg width="24" height="24" viewBox="0 0 24 24"><circle cx="12" cy="12" r="11.500" fill="#1577c9" /><path d="M1 10C2 4 7 .5 12 .5c7 0 11.500 5 11.500 9.500 0 4-3 6-6 6-2 0-4-1-3-2.500 2-3-.5-6-4-6C6 7.500 2 9 1 10z" fill="#36c3c0" /><path d="M13 .5c6 .5 10.500 5 10.500 9.500 0 4-3 6-6 6-2 0-3.500-1-3-2.500C18 9 18 4 13 .5z" fill="#6fd65a" /><path d="M9 9c-3 4-2 10 4 12 3 1 6 0 8.500-2-2 3-5.500 4.500-9.500 4.500C6 23.500 1 19 .5 13 1 9 5 7 9 9z" fill="#0d55a5" /><path d="M1 10c3-4 9-4 11 0-3-1-5 3-3 6-4-2-6-5-8-6z" fill="#2aa3dc" /></svg></button>
      </div>
      <div class="tray">
        <button class="up" aria-label="Hidden icons"><svg width="12" height="7" fill="none" stroke="#fff" stroke-width="1.300"><path d="M1 6l5-5 5 5" /></svg></button>
        <button class="battery" aria-label="Battery"><svg width="15" height="9" viewBox="0 0 15 9"><path d="M.5.5h12v8H.5z" fill="none" stroke="#fff" /><path d="M2 2h8v5H2zM13 3h1.500v3H13z" fill="#fff" /></svg></button>
        <button class="lang">ENG</button>
        <button class="clock"><span>16:46</span><span>06-09-2020</span></button>
        <button class="notes" aria-label="Notifications"><svg width="23" height="23" viewBox="0 0 23 23"><path d="M0 1h16v12H6l-3 3v-3H0z" fill="#fff" /><path d="M3 4.500h10M3 7h10M3 9.500h7" stroke="#1b2645" /><circle cx="15" cy="15" r="7" fill="#33373f" stroke="#888" /><text x="15" y="19" text-anchor="middle" font-size="11" font-weight="700" fill="#fff">2</text></svg></button>
      </div>
    </footer>`;
  }

  render() {
    return html`${this.renderTop()}${this.renderRibbon()}${this.renderBook()}${this.renderTaskbar()}`;
  }
}
